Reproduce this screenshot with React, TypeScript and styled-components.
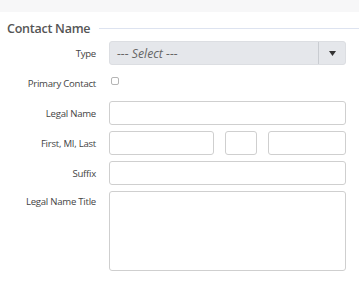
import React from "react";
import styled, { createGlobalStyle } from "styled-components";

const Global = createGlobalStyle`
  html, body { margin: 0; padding: 0; background: #fff; }
  body { font-family: "Open Sans", "Noto Sans", sans-serif; }
  * { box-sizing: border-box; }
`;

const TopStrip = styled.div`
  height: 12px;
  background: #f7f7f8;
`;

const Section = styled.section`
  padding: 0 13px 0 7px;
`;

const Legend = styled.div`
  display: flex;
  align-items: center;
  gap: 9px;
  height: 29px;
  padding-top: 4px;
`;

const LegendTitle = styled.h2`
  margin: 0;
  font-size: 12.5px;
  font-weight: 600;
  color: #555;
  white-space: nowrap;
  letter-spacing: -0.25px;
`;

const LegendLine = styled.div`
  flex: 1;
  height: 1px;
  background: #dde3f0;
  margin-right: -13px;
`;

const Form = styled.div`
  display: grid;
  grid-template-columns: 89px 1fr;
  column-gap: 13px;
  row-gap: 6px;
`;

const Label = styled.label<{ $top?: boolean }>`
  font-size: 9.6px;
  color: #444;
  text-align: right;
  align-self: ${(p) => (p.$top ? "start" : "center")};
  padding-top: ${(p) => (p.$top ? "4px" : "0")};
  white-space: nowrap;
  letter-spacing: -0.25px;
`;

const Select = styled.div`
  height: 24px;
  display: flex;
  align-items: stretch;
  background: #e5e7eb;
  border: 1px solid #dcdee2;
  border-radius: 3px;
`;

const SelectText = styled.span`
  flex: 1;
  display: flex;
  align-items: center;
  padding-left: 7px;
  font-size: 12.3px;
  font-style: italic;
  color: #666;
`;

const SelectButton = styled.span`
  width: 27px;
  border-left: 1px solid #c9ccd1;
  display: flex;
  align-items: center;
  justify-content: center;
`;

const CheckRow = styled.div`
  height: 24px;
  display: flex;
  align-items: flex-start;
  padding-top: 6px;
  padding-left: 2px;
`;

const Checkbox = styled.span`
  width: 8px;
  height: 8px;
  border: 1px solid #b5b5b5;
  border-radius: 2px;
  background: #fff;
`;

const Input = styled.div<{ $h?: number }>`
  height: ${(p) => p.$h ?? 24}px;
  border: 1px solid #cfcfcf;
  border-radius: 3px;
  background: #fff;
`;

const NameRow = styled.div`
  display: grid;
  grid-template-columns: 105px 32px 1fr;
  column-gap: 11px;
`;

export default function App() {
  return (
    <>
      <Global />
      <TopStrip />
      <Section>
        <Legend>
          <LegendTitle>Contact Name</LegendTitle>
          <LegendLine />
        </Legend>
        <Form>
          <Label>Type</Label>
          <Select>
            <SelectText>--- Select ---</SelectText>
            <SelectButton>
              <svg width="7" height="5" viewBox="0 0 7 5">
                <path d="M0 0 H7 L3.5 5 Z" fill="#333" />
              </svg>
            </SelectButton>
          </Select>

          <Label>Primary Contact</Label>
          <CheckRow>
            <Checkbox />
          </CheckRow>

          <Label>Legal Name</Label>
          <Input />

          <Label>First, MI, Last</Label>
          <NameRow>
            <Input />
            <Input />
            <Input />
          </NameRow>

          <Label>Suffix</Label>
          <Input />

          <Label $top>Legal Name Title</Label>
          <Input $h={80} />
        </Form>
      </Section>
    </>
  );
}
